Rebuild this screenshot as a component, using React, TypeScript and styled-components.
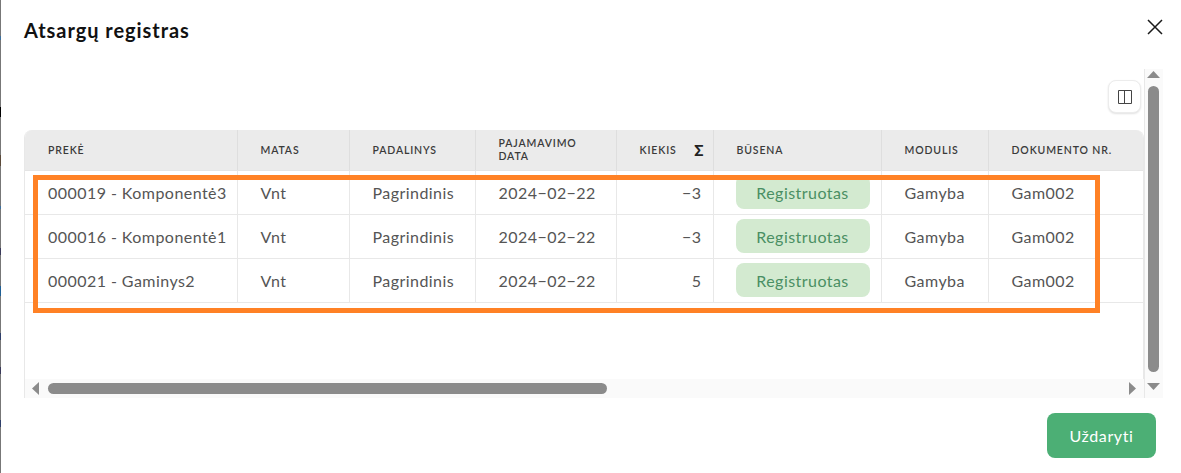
import React from "react";
import styled, { createGlobalStyle } from "styled-components";

const GlobalStyle = createGlobalStyle`
  html, body {
    margin: 0;
    padding: 0;
    background: #fff;
    overflow: hidden;
  }
  * {
    box-sizing: border-box;
  }
`;

const Page = styled.div`
  position: relative;
  width: 1181px;
  height: 473px;
  display: flex;
  flex-direction: column;
  padding-left: 24px;
  background: #fff;
  font-family: Lato, "Liberation Sans", sans-serif;

  /* the page behind the dialog shows as a thin strip on the left */
  &::before {
    content: "";
    position: absolute;
    left: 0;
    top: 0;
    width: 1px;
    height: 473px;
    background: linear-gradient(
      to bottom,
      #777 0 36px,
      #3d6f9c 36px 40px,
      #777 40px 107px,
      #000 107px 117px,
      #777 117px 155px,
      #5b4a3a 155px 166px,
      #777 166px 206px,
      #3d6f9c 206px 209px,
      #777 209px 248px,
      #3a3a5a 248px 255px,
      #777 255px 286px,
      #1f5f95 286px 296px,
      #777 296px 333px,
      #2f3f6a 333px 340px,
      #777 340px 367px,
      #3a3a5a 367px 374px,
      #777 374px 420px,
      #2f3f6a 420px 427px,
      #777 427px 473px
    );
  }
`;

const Header = styled.header`
  height: 69px;
  display: flex;
  justify-content: space-between;
  padding: 19px 18px 0 0;
`;

const Title = styled.h1`
  margin: 0;
  font-size: 20px;
  line-height: 23px;
  font-weight: 700;
  letter-spacing: 0.95px;
  color: #111;
`;

const CloseButton = styled.button`
  width: 16px;
  height: 16px;
  padding: 0;
  border: 0;
  background: none;
  color: #1a1a1a;
  display: block;
`;

const Body = styled.div`
  width: 1139px;
  height: 329px;
  display: grid;
  grid-template-columns: 1120px 19px;
  grid-template-rows: 310px 19px;
`;

const Content = styled.div`
  grid-column: 1;
  grid-row: 1;
  min-width: 0;
  display: flex;
  flex-direction: column;
`;

const Toolbar = styled.div`
  height: 61px;
  display: flex;
  justify-content: flex-end;
  padding: 11px 3px 0 0;
`;

const ColumnsButton = styled.button`
  width: 33px;
  height: 33px;
  padding: 0;
  border: 1px solid #ececec;
  border-radius: 8px;
  background: #fff;
  box-shadow: 0 1px 2px rgba(0, 0, 0, 0.12);
  display: flex;
  align-items: center;
  justify-content: center;
  color: #444;
`;

const TableBox = styled.div`
  flex: 1;
  border-left: 1px solid #e8e8e8;
  border-right: 1px solid #e8e8e8;
  border-radius: 8px 8px 0 0;
  overflow: hidden;
`;

const Table = styled.table`
  width: 1118px;
  border-collapse: collapse;
  table-layout: fixed;
`;

const HeadCell = styled.th<{ $right?: boolean }>`
  height: 40px;
  padding: 1px 23px 0;
  background: #ebebeb;
  border-right: 1px solid #dedede;
  border-bottom: 1px solid #e4e4e4;
  font-size: 10.5px;
  line-height: 13px;
  font-weight: 600;
  letter-spacing: 0.85px;
  text-align: ${(p) => (p.$right ? "right" : "left")};
  text-transform: uppercase;
  color: #3a3a3a;

  &:last-child {
    border-right: 0;
    padding-right: 0;
    white-space: nowrap;
  }
`;

const SumHead = styled.div`
  display: flex;
  justify-content: space-between;
  align-items: center;
  margin: 0 -14px 0 0;
`;

const Sigma = styled.span`
  font-size: 15px;
  font-weight: 900;
  color: #222;
  letter-spacing: 0;
`;

const Cell = styled.td<{ $right?: boolean }>`
  height: 44px;
  padding: 0 23px;
  border-right: 1px solid #e8e8e8;
  border-bottom: 1px solid #e8e8e8;
  font-size: 16px;
  font-weight: 400;
  letter-spacing: 0.45px;
  color: #555;
  white-space: nowrap;
  text-align: ${(p) => (p.$right ? "right" : "left")};

  &:last-child {
    border-right: 0;
  }
`;

const QtyCell = styled(Cell)`
  padding-right: 11px;
`;

const Badge = styled.div`
  width: 134px;
  height: 34px;
  margin-left: -1px;
  border-radius: 8px;
  background: #d3ead0;
  color: #4a8f63;
  display: flex;
  align-items: center;
  justify-content: center;
`;

const VerticalBar = styled.div`
  grid-column: 2;
  grid-row: 1 / span 2;
  background: #fafafa;
  border-left: 1px solid #e8e8e8;
  position: relative;
`;

const VerticalThumb = styled.div`
  position: absolute;
  top: 17px;
  left: 3px;
  width: 11px;
  height: 286px;
  border-radius: 6px;
  background: #8b8b8b;
`;

const HorizontalBar = styled.div`
  grid-column: 1;
  grid-row: 2;
  border-left: 1px solid #e8e8e8;
  background: #fafafa;
  position: relative;
`;

const HorizontalThumb = styled.div`
  position: absolute;
  top: 4px;
  left: 23px;
  width: 559px;
  height: 11px;
  border-radius: 6px;
  background: #8b8b8b;
`;

const Arrow = styled.svg<{ $x: number; $y: number }>`
  position: absolute;
  left: ${(p) => p.$x}px;
  top: ${(p) => p.$y}px;
  fill: #8b8b8b;
`;

const Footer = styled.footer`
  display: flex;
  justify-content: flex-end;
  padding: 15px 25px 0 0;
`;

const CloseAction = styled.button`
  width: 109px;
  height: 45px;
  border: 0;
  border-radius: 8px;
  background: #4caf75;
  color: #fff;
  font-family: inherit;
  font-size: 16px;
  letter-spacing: 0.6px;
`;

const Highlight = styled.div`
  position: absolute;
  left: 33px;
  top: 175px;
  width: 1067px;
  height: 138px;
  border: 5px solid #ff8125;
  pointer-events: none;
`;

const widths = [212, 112, 126, 141, 97, 168, 107, 155];

const rows = [
  { item: "000019 - Komponentė3", qty: "−3" },
  { item: "000016 - Komponentė1", qty: "−3" },
  { item: "000021 - Gaminys2", qty: "5" },
];

const App: React.FunctionComponent = () => {
  return (
    <>
      <GlobalStyle />
      <Page>
        <Header>
          <Title>Atsargų registras</Title>
          <CloseButton aria-label="Close">
            <svg width="16" height="16" viewBox="0 0 16 16" fill="none" stroke="currentColor" strokeWidth="1.5">
              <path d="M1 1l14 14M15 1L1 15" />
            </svg>
          </CloseButton>
        </Header>
        <Body>
          <Content>
            <Toolbar>
              <ColumnsButton aria-label="Columns">
                <svg width="14" height="14" viewBox="0 0 14 14" fill="none" stroke="currentColor" strokeWidth="1">
                  <path d="M.5.5h13v13H.5zM6.5 .5v13" />
                </svg>
              </ColumnsButton>
            </Toolbar>
            <TableBox>
              <Table>
                <colgroup>
                  {widths.map((w, idx) => (
                    <col key={idx} style={{ width: w }} />
                  ))}
                </colgroup>
                <thead>
                  <tr>
                    <HeadCell>Prekė</HeadCell>
                    <HeadCell>Matas</HeadCell>
                    <HeadCell>Padalinys</HeadCell>
                    <HeadCell>Pajamavimo data</HeadCell>
                    <HeadCell $right>
                      <SumHead>
                        Kiekis <Sigma>Σ</Sigma>
                      </SumHead>
                    </HeadCell>
                    <HeadCell>Būsena</HeadCell>
                    <HeadCell>Modulis</HeadCell>
                    <HeadCell>Dokumento nr.</HeadCell>
                  </tr>
                </thead>
                <tbody>
                  {rows.map((row) => (
                    <tr key={row.item}>
                      <Cell>{row.item}</Cell>
                      <Cell>Vnt</Cell>
                      <Cell>Pagrindinis</Cell>
                      <Cell>2024−02−22</Cell>
                      <QtyCell $right>{row.qty}</QtyCell>
                      <Cell>
                        <Badge>Registruotas</Badge>
                      </Cell>
                      <Cell>Gamyba</Cell>
                      <Cell>Gam002</Cell>
                    </tr>
                  ))}
                </tbody>
              </Table>
            </TableBox>
          </Content>
          <VerticalBar>
            <Arrow $x={2} $y={2} width="13" height="7" viewBox="0 0 13 7">
              <path d="M6.5 0L13 7H0z" />
            </Arrow>
            <VerticalThumb />
            <Arrow $x={2} $y={314} width="13" height="7" viewBox="0 0 13 7">
              <path d="M0 0h13L6.5 7z" />
            </Arrow>
          </VerticalBar>
          <HorizontalBar>
            <Arrow $x={7} $y={3} width="7" height="13" viewBox="0 0 7 13">
              <path d="M7 0v13L0 6.5z" />
            </Arrow>
            <HorizontalThumb />
            <Arrow $x={1104} $y={3} width="7" height="13" viewBox="0 0 7 13">
              <path d="M0 0l7 6.5L0 13z" />
            </Arrow>
          </HorizontalBar>
        </Body>
        <Footer>
          <CloseAction>Uždaryti</CloseAction>
        </Footer>
        <Highlight />
      </Page>
    </>
  );
};

export default App;
